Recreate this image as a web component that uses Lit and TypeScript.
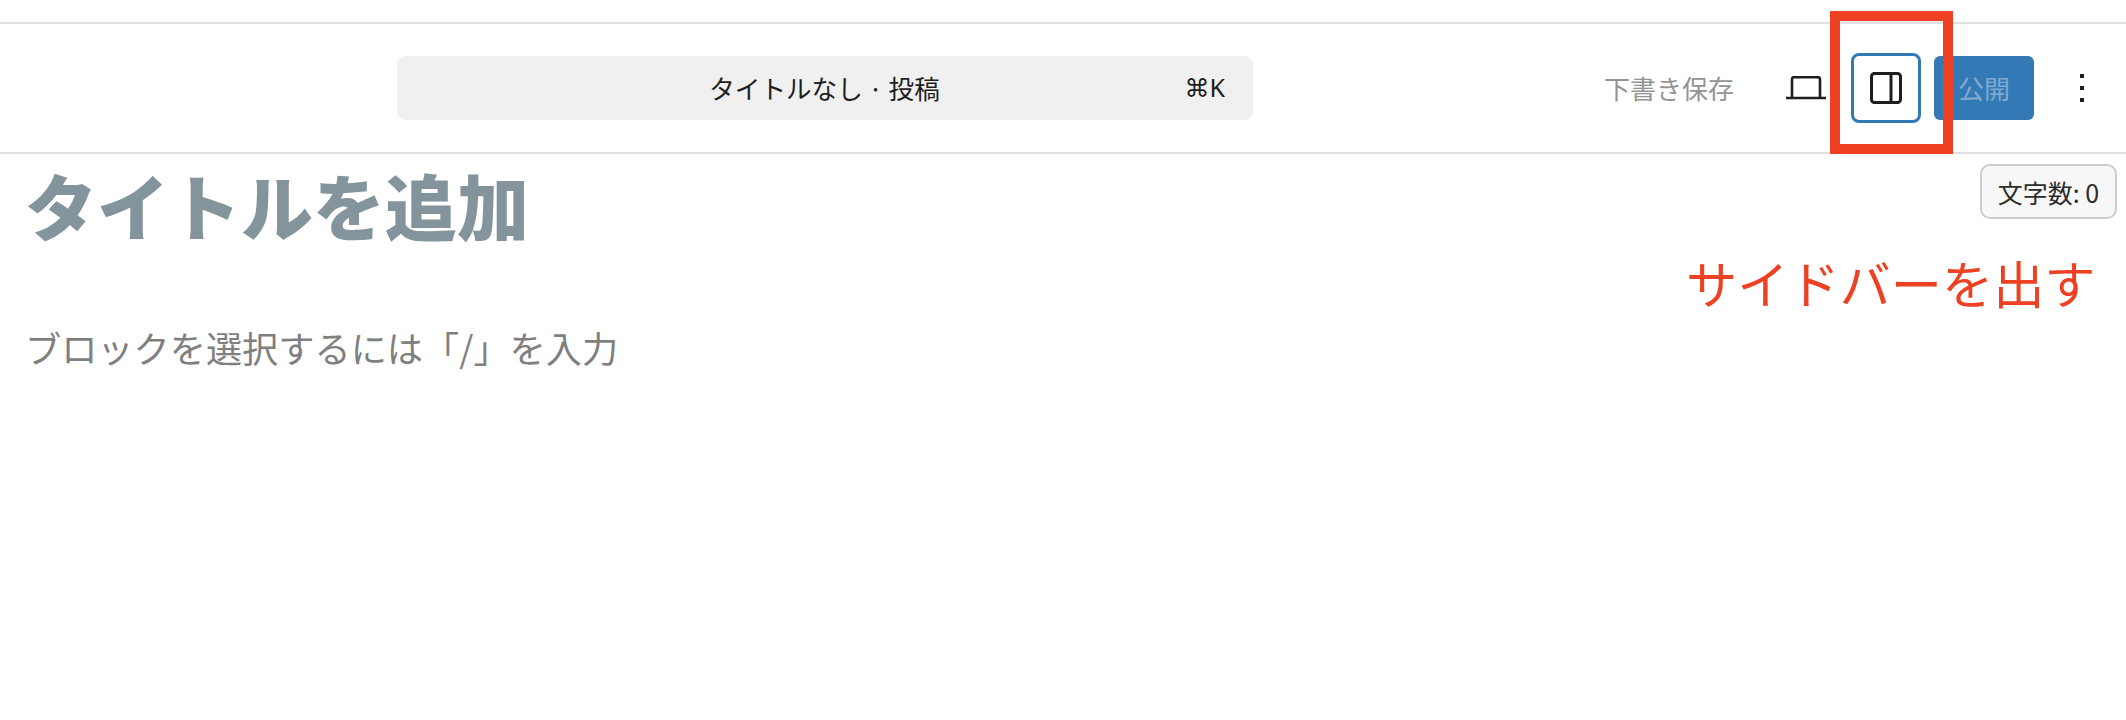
import { LitElement, html, css } from "lit";
import { customElement } from "lit/decorators.js";

@customElement("app-root")
export class AppRoot extends LitElement {
  static styles = css`
    :host {
      display: block;
      position: relative;
      width: 2126px;
      height: 720px;
      background: #fff;
      overflow: hidden;
      font-family: "Noto Sans CJK JP", "Noto Sans", sans-serif;
    }
    .header {
      margin-top: 22px;
      height: 128px;
      border-top: 2px solid #e0e0e0;
      border-bottom: 2px solid #e0e0e0;
      display: flex;
      align-items: center;
      padding: 0 16px 0 397px;
    }
    .search {
      width: 856px;
      height: 64px;
      box-sizing: border-box;
      padding: 0 28px 2px 27px;
      border-radius: 8px;
      background: #f0f0f0;
      color: #1e1e1e;
      font-size: 25.6px;
      display: grid;
      grid-template-columns: 1fr auto 1fr;
      align-items: center;
    }
    .shortcut {
      justify-self: end;
      font-family: "Noto Sans", "DejaVu Sans", sans-serif;
      font-size: 25px;
    }
    .actions {
      margin-left: auto;
      display: flex;
      align-items: center;
    }
    .save {
      color: #949494;
      font-size: 26px;
      margin-right: 37px;
      padding-bottom: 2px;
    }
    .icon {
      display: flex;
      align-items: center;
      justify-content: center;
      width: 70px;
      height: 70px;
      box-sizing: border-box;
    }
    .laptop {
      margin-right: 10px;
    }
    .panel {
      border: 3px solid #3379b5;
      border-radius: 8px;
      margin-right: 13px;
    }
    .publish {
      width: 100px;
      height: 64px;
      box-sizing: border-box;
      padding-bottom: 2px;
      border-radius: 6px;
      background: #3379b5;
      color: #7fa9cf;
      font-size: 26px;
      display: flex;
      align-items: center;
      justify-content: center;
      margin-right: 20px;
    }
    .menu {
      width: 56px;
    }
    .content {
      padding: 5px 25px 0;
    }
    h1 {
      margin: 0;
      color: #84949c;
      font-size: 72px;
      font-weight: 900;
      line-height: 90px;
    }
    .hint {
      margin-top: 72px;
      color: #7f7f7f;
      font-size: 36.2px;
      line-height: 52px;
    }
    .count {
      position: absolute;
      left: 1980px;
      top: 164px;
      width: 137px;
      height: 55px;
      box-sizing: border-box;
      border: 2px solid #ccc;
      border-radius: 10px;
      background: #f7f7f7;
      color: #2c2c2c;
      font-size: 25px;
      display: flex;
      align-items: center;
      justify-content: center;
    }
    .note {
      position: absolute;
      left: 1686px;
      top: 246px;
      color: #ee4023;
      font-size: 51.2px;
      line-height: 72px;
      white-space: nowrap;
    }
    .frame {
      position: absolute;
      left: 1830px;
      top: 11px;
      width: 123px;
      height: 143px;
      box-sizing: border-box;
      border: 10px solid #ee4023;
    }
  `;

  render() {
    return html`
      <div class="header">
        <div class="search">
          <span></span>
          <span>タイトルなし · 投稿</span>
          <span class="shortcut">⌘K</span>
        </div>
        <div class="actions">
          <span class="save">下書き保存</span>
          <span class="icon laptop">
            <svg width="40" height="24" viewBox="0 0 40 24" fill="none" stroke="#1e1e1e" stroke-width="2.6">
              <path d="M6 21.5V3.2a2 2 0 0 1 2-2h24a2 2 0 0 1 2 2v18.3" />
              <path d="M0 22h40" />
            </svg>
          </span>
          <span class="icon panel">
            <svg width="32" height="32" viewBox="0 0 32 32" fill="none" stroke="#1e1e1e" stroke-width="3">
              <rect x="1.5" y="1.5" width="29" height="29" rx="3" />
              <path d="M21 1.5v29" />
            </svg>
          </span>
          <span class="publish">公開</span>
          <span class="icon menu">
            <svg width="6" height="30" viewBox="0 0 6 30" fill="#1e1e1e">
              <rect x="1" y="1" width="4" height="4" />
              <rect x="1" y="13" width="4" height="4" />
              <rect x="1" y="25" width="4" height="4" />
            </svg>
          </span>
        </div>
      </div>
      <div class="content">
        <h1>タイトルを追加</h1>
        <div class="hint">ブロックを選択するには「/」を入力</div>
      </div>
      <div class="count">文字数: 0</div>
      <div class="note">サイドバーを出す</div>
      <div class="frame"></div>
    `;
  }
}
